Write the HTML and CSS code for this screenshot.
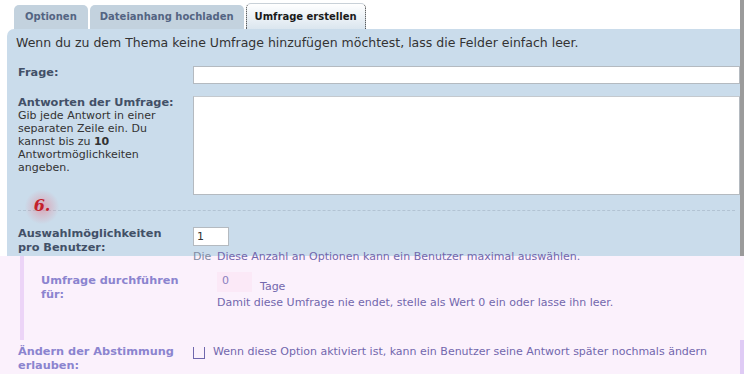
FILE: index.html
```html
<!DOCTYPE html>
<html lang="de">
<head>
  <meta charset="UTF-8" />
  <meta name="viewport" content="width=device-width, initial-scale=1.0" />
  <link rel="stylesheet" href="styles.css">
</head>
<body>
  <div class="sheet">
    <ul class="tabs">
      <li><a href="#">Optionen</a></li>
      <li><a href="#">Dateianhang hochladen</a></li>
      <li class="active"><a href="#">Umfrage erstellen</a></li>
    </ul>

    <div class="panel">
      <p class="intro">Wenn du zu dem Thema keine Umfrage hinzufügen möchtest, lass die Felder einfach leer.</p>

      <div class="row">
        <label class="label" for="poll-title">Frage:</label>
        <div class="field"><input id="poll-title" class="text wide" type="text" /></div>
      </div>

      <div class="row row-tall">
        <div class="label">
          <label for="poll-options">Antworten der Umfrage:</label>
          <span class="explain">Gib jede Antwort in einer separaten Zeile ein. Du kannst bis zu <strong>10</strong> Antwortmöglichkeiten angeben.</span>
        </div>
        <div class="field"><textarea id="poll-options"></textarea></div>
      </div>

      <div class="divider">
        <span class="mark">6.</span>
      </div>

      <div class="row">
        <label class="label" for="poll-max">Auswahlmöglichkeiten pro Benutzer:</label>
        <div class="field"><input id="poll-max" class="text small" type="text" value="1" /></div>
      </div>
    </div>
  </div>

  <!-- eingefügte Ebene -->
  <div class="ghost">
    <div class="ghost-block">
      <p class="ghost-line"><span class="old">Die</span>Diese Anzahl an Optionen kann ein Benutzer maximal auswählen.</p>
      <div class="ghost-row">
        <div class="ghost-label">Umfrage durchführen für:</div>
        <div class="ghost-field">
          <div class="days"><span class="days-box">0</span><span class="days-unit">Tage</span></div>
          <p class="ghost-explain">Damit diese Umfrage nie endet, stelle als Wert 0 ein oder lasse ihn leer.</p>
        </div>
      </div>
    </div>
    <div class="change-row">
      <div class="change-label">Ändern der Abstimmung erlauben:</div>
      <span class="check"></span>
      <span class="change-text">Wenn diese Option aktiviert ist, kann ein Benutzer seine Antwort später nochmals ändern</span>
    </div>
  </div>
</body>
</html>
```

FILE: styles.css
```css
:root {
  --panel-bg: #cadceb;
  --tab-bg: #c3d2de;
  --label-color: #425067;
  --ghost-bg: #fbf1fc;
  --ghost-text: #7267ad;
  --ghost-label: #8b84cf;
}
body {
  margin: 0;
  background: #fff;
  font-family: "DejaVu Sans", Verdana, sans-serif;
  color: #333;
  overflow: hidden;
}

.sheet {
  border-right: 4px solid #9b9b9b;
}

/* Reiter */
.tabs {
  display: flex;
  align-items: flex-end;
  gap: 2px;
  list-style: none;
  margin: 0;
  padding: 0 0 0 14px;
  height: 29px;
}
.tabs a {
  display: block;
  height: 24px;
  line-height: 24px;
  padding: 0 10px;
  background: var(--tab-bg);
  border-radius: 5px 5px 0 0;
  color: #536482;
  font-size: 10px;
  font-weight: bold;
  text-decoration: none;
}
.tabs li:first-child a {
  padding: 0 11px;
}
.tabs .active a {
  height: 25px;
  line-height: 25px;
  padding: 0 8px;
  background: linear-gradient(#ffffff, #dbe6ef);
  border-top: 1px solid #c9d1d8;
  border-left: 1px dotted #333;
  border-right: 1px dotted #333;
  color: #1a1a1a;
}

/* Formular */
.panel {
  box-sizing: border-box;
  height: 227px;
  margin-left: 7px;
  padding-top: 6px;
  background: var(--panel-bg);
  border-radius: 7px 0 0 0;
  overflow: hidden;
}
.intro {
  margin: 0 0 15px 9px;
  font-size: 12.5px;
  line-height: 16px;
}
.row {
  display: flex;
  align-items: flex-start;
  margin-bottom: 12px;
}
.row-tall {
  margin-bottom: 0;
}
.label {
  flex: none;
  width: 160px;
  margin-left: 11px;
  color: var(--label-color);
  font-size: 11.3px;
  font-weight: bold;
  line-height: 14px;
}
.row-tall .label {
  line-height: 13px;
}
.label .explain {
  display: block;
  color: #333;
  font-size: 11px;
  font-weight: normal;
}
.label .explain strong {
  color: #333;
}
.field {
  flex: 1;
  margin-left: 15px;
}
.text,
textarea {
  display: block;
  box-sizing: border-box;
  border: 1px solid #b4bac0;
  background: #fff;
  font-family: inherit;
  font-size: 11px;
  color: #333;
  margin: 0;
}
.wide {
  width: 100%;
  height: 18px;
}
.small {
  width: 36px;
  height: 19px;
  padding: 0 3px;
}
textarea {
  width: 100%;
  height: 99px;
  resize: none;
  border-top-color: #c4c9ce;
}

.divider {
  position: relative;
  height: 15px;
  margin: 0 5px 16px 11px;
  border-bottom: 1px dashed #b2c3d3;
}
.mark {
  position: absolute;
  left: 6px;
  top: -6px;
  width: 36px;
  height: 36px;
  line-height: 34px;
  text-align: center;
  background: radial-gradient(circle, rgba(236, 110, 128, 0.5) 0, rgba(236, 110, 128, 0.2) 40%, rgba(236, 110, 128, 0) 68%);
  color: #c3202b;
  font-family: "DejaVu Serif", serif;
  font-style: italic;
  font-weight: bold;
  font-size: 16px;
}

/* eingefügte Ebene */
.ghost {
  height: 118px;
  background: var(--ghost-bg);
  color: var(--ghost-text);
  font-size: 11px;
}
.ghost-block {
  display: flow-root;
  height: 84px;
  margin-left: 20px;
  border-left: 4px solid #ecd4f7;
}
.ghost-line {
  margin: -6px 0 0 169px;
  line-height: 14px;
  white-space: nowrap;
}
.ghost-line .old {
  display: inline-block;
  width: 24px;
  color: #7f8ba3;
}
.ghost-row {
  display: flex;
  margin-top: 10px;
}
.ghost-label {
  flex: none;
  width: 160px;
  margin-left: 17px;
  color: var(--ghost-label);
  font-size: 11.3px;
  font-weight: bold;
  line-height: 14px;
}
.ghost-field {
  margin-left: 16px;
}
.days {
  display: flex;
  align-items: flex-end;
  height: 20px;
  margin-top: -2px;
}
.days-box {
  width: 35px;
  height: 20px;
  line-height: 18px;
  padding-left: 5px;
  box-sizing: border-box;
  background: #fbe9f7;
  color: #8a80c0;
}
.days-unit {
  margin-left: 8px;
  line-height: 14px;
  margin-bottom: -2px;
}
.ghost-explain {
  margin: 4px 0 0;
  line-height: 14px;
  white-space: nowrap;
}
.change-row {
  display: flex;
  align-items: flex-start;
  padding-top: 5px;
  border-right: 4px solid #dfcbf5;
  height: 40px;
}
.change-label {
  flex: none;
  width: 160px;
  margin-left: 18px;
  color: var(--ghost-label);
  font-size: 11.3px;
  font-weight: bold;
  line-height: 14px;
}
.check {
  flex: none;
  width: 10px;
  height: 11px;
  margin: 2px 0 0 15px;
  border: 1px solid #6f67ad;
  border-top: 0;
}
.change-text {
  margin-left: 8px;
  line-height: 14px;
  white-space: nowrap;
}
```
